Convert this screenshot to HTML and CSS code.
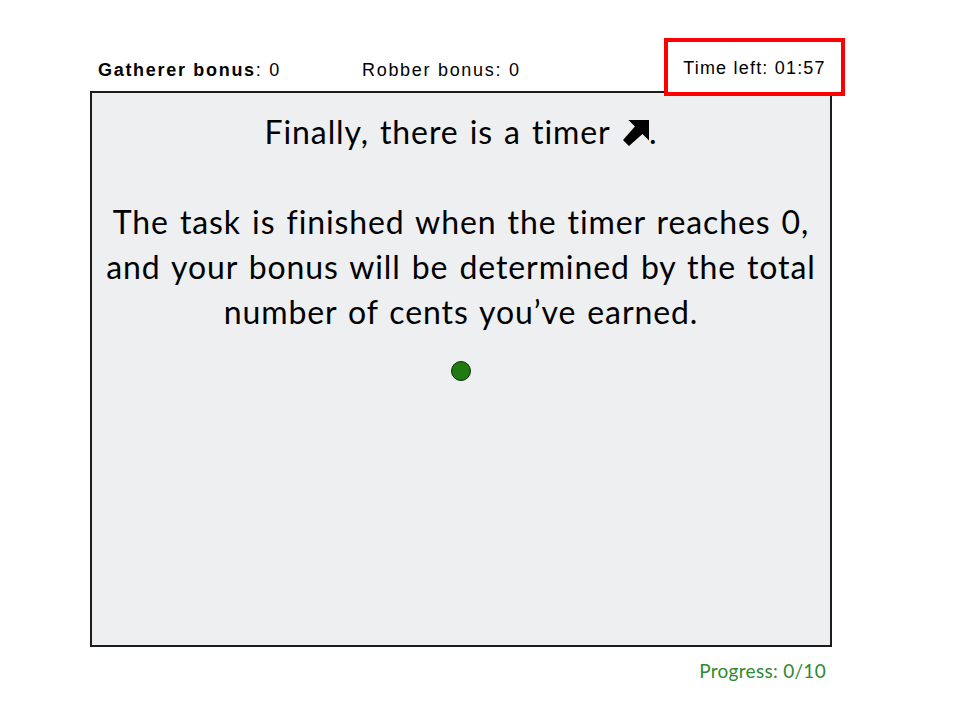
FILE: index.html
```html
<!DOCTYPE html>
<html>
<head>
<meta charset="utf-8">
<link rel="stylesheet" href="styles.css">
</head>
<body>
<div class="page">
  <div class="header">
    <div class="bonus gatherer"><b>Gatherer bonus</b>: 0</div>
    <div class="bonus robber">Robber bonus: 0</div>
    <div class="timer">Time left: 01:57</div>
  </div>
  <div class="board">
    <p class="line">Finally, there is a timer <svg class="arrow" viewBox="0 0 24 24" width="26" height="26"><polygon points="24,0 24,19 18,13 5.5,24 0,18.5 11,6 5,0" fill="#000"/></svg>.</p>
    <p class="para">The task is finished when the timer reaches 0,<br>and your bonus will be determined by the total<br>number of cents you’ve earned.</p>
    <div class="dot"></div>
  </div>
  <div class="progress">Progress: 0/10</div>
</div>
</body>
</html>
```
FILE: styles.css
```css
html, body {
  margin: 0;
  padding: 0;
  background: #fff;
  width: 960px;
  height: 720px;
  overflow: hidden;
}
.page {
  padding: 0 0 0 90px;
  width: 742px;
  display: flex;
  flex-direction: column;
}
.header {
  position: relative;
  height: 91px;
  display: flex;
  align-items: flex-end;
  font-family: "Liberation Sans", Arial, sans-serif;
  font-size: 18px;
  letter-spacing: 1.7px;
  color: #000;
}
.bonus {
  line-height: 20px;
  padding-bottom: 11px;
}
.gatherer {
  margin-left: 8px;
  width: 264px;
}
.timer {
  position: absolute;
  left: 574px;
  top: 38px;
  width: 173px;
  border: 4px solid #f00;
  background: #fff;
  display: flex;
  align-items: center;
  justify-content: center;
  padding-top: 2px;
  box-sizing: content-box;
  height: 48px;
  letter-spacing: 1.2px;
  z-index: 2;
}
.board {
  height: 552px;
  border: 2px solid #1c1c1c;
  background: #eeeff1;
  display: flex;
  flex-direction: column;
  align-items: center;
  font-family: Lato, "Open Sans", sans-serif;
  font-size: 32px;
  letter-spacing: 0.9px;
  word-spacing: 2px;
  line-height: 45px;
  color: #000;
  text-align: center;
}
.board p {
  margin: 0;
}
.line {
  margin-top: 16px !important;
}
.para {
  margin-top: 45px !important;
}
.arrow {
  vertical-align: -2px;
  margin-left: 2px;
}
.dot {
  margin-top: 27px;
  width: 18px;
  height: 18px;
  border-radius: 50%;
  background: #1f7a0f;
  border: 1.5px solid #0d2a08;
}
.progress {
  align-self: flex-end;
  margin-top: 12px;
  margin-right: 6px;
  font-family: Lato, "Open Sans", sans-serif;
  font-size: 19px;
  letter-spacing: 0.3px;
  color: #2e8a2e;
}
```
